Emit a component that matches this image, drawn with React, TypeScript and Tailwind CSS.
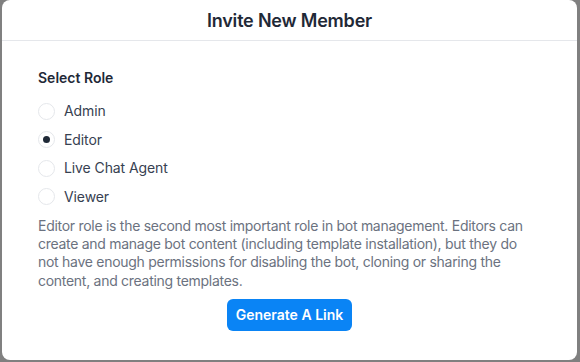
import React from "react";

const roles = ["Admin", "Editor", "Live Chat Agent", "Viewer"];

export default function App() {
  const selected = "Editor";
  return (
    <div
      className="w-[580px] h-[362px] bg-[#808080] flex items-start pl-[2px] overflow-hidden"
      style={{ fontFamily: "Inter, 'Noto Sans', sans-serif" }}
    >
      <div className="w-[575px] h-[360px] bg-white rounded-lg flex flex-col">
        <div className="h-[41px] border-b border-[#e5e7eb] flex items-center justify-center">
          <h1 className="text-[18px] font-semibold text-[#1f2937] tracking-[-0.2px] mt-[1px]">
            Invite New Member
          </h1>
        </div>
        <div className="flex flex-col px-[36px] pt-[27px]">
          <div className="text-[14px] font-semibold text-[#1f2937] leading-[20px]">Select Role</div>
          <div className="flex flex-col gap-[8.6px] mt-[13px]">
            {roles.map((r) => (
              <label key={r} className="flex items-center gap-[9px] h-[20px]">
                <span className="w-[17px] h-[17px] rounded-full border border-[#e5e7eb] bg-white flex items-center justify-center">
                  {r === selected && <span className="w-[7px] h-[7px] rounded-full bg-[#1f2937]" />}
                </span>
                <span className="text-[14px] text-[#374151] leading-[20px] tracking-[-0.1px]">{r}</span>
              </label>
            ))}
          </div>
          <p className="mt-[10px] pr-[12px] text-[14px] leading-[18.3px] text-[#6b7280] tracking-[-0.28px]">
            Editor role is the second most important role in bot management. Editors can create and manage bot content (including template installation), but they do not have enough permissions for disabling the bot, cloning or sharing the content, and creating templates.
          </p>
          <div className="flex justify-center mt-[9px]">
            <button className="h-[32px] w-[125px] rounded-md bg-[#0a84f5] text-white text-[14px] font-semibold">
              Generate A Link
            </button>
          </div>
        </div>
      </div>
    </div>
  );
}
